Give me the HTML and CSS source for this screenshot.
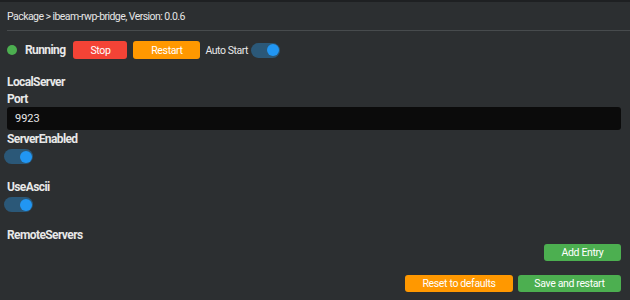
FILE: index.html
```html
<!DOCTYPE html>
<html lang="en">
<head>
  <meta charset="UTF-8">
  <title>Package ibeam-rwp-bridge</title>
  <link rel="stylesheet" href="styles.css">
</head>
<body>
  <div class="panel">
    <!-- Header -->
    <div class="crumb">Package &gt; ibeam-rwp-bridge, Version: 0.0.6</div>

    <!-- Status row -->
    <div class="status-row">
      <span class="dot"></span>
      <span class="state">Running</span>
      <button class="btn red stop">Stop</button>
      <button class="btn orange restart">Restart</button>
      <span class="auto-label">Auto Start</span>
      <span class="toggle"><span class="knob"></span></span>
    </div>

    <!-- Settings -->
    <div class="settings">
      <div class="group-title">LocalServer</div>
      <div class="field-label">Port</div>
      <div class="input">9923</div>
      <div class="field-label">ServerEnabled</div>
      <span class="toggle field-toggle"><span class="knob"></span></span>
      <div class="field-label spaced">UseAscii</div>
      <span class="toggle field-toggle"><span class="knob"></span></span>
      <div class="group-title remote">RemoteServers</div>
      <div class="entry-row">
        <button class="btn green add">Add Entry</button>
      </div>
    </div>

    <!-- Footer -->
    <div class="footer">
      <button class="btn orange reset">Reset to defaults</button>
      <button class="btn green save">Save and restart</button>
    </div>
  </div>
</body>
</html>
```

FILE: styles.css
```css
* {
  margin: 0;
  padding: 0;
  box-sizing: border-box;
}
html, body {
  width: 100%;
  height: 100%;
  background: #2c2f31;
  font-family: 'Roboto', 'Liberation Sans', sans-serif;
  color: #e8e8e8;
  overflow: hidden;
}
.panel {
  border-top: 2px solid #1e2022;
  padding-left: 7px;
}
/* Header */
.crumb {
  font-size: 10.5px;
  letter-spacing: -0.55px;
  height: 29px;
  line-height: 30px;
  color: #e6e6e6;
  border-bottom: 1px solid #474b4d;
}
/* Status */
.status-row {
  display: flex;
  align-items: center;
  height: 37px;
  padding-top: 1px;
}
.dot {
  width: 10px;
  height: 10px;
  border-radius: 50%;
  background: #4caf50;
}
.state {
  font-weight: bold;
  font-size: 12px;
  letter-spacing: -0.6px;
  margin-left: 8px;
  margin-right: 8px;
}
.btn {
  display: flex;
  align-items: center;
  justify-content: center;
  border: none;
  border-radius: 3px;
  font-family: inherit;
  font-size: 10.5px;
  letter-spacing: -0.35px;
  color: #fff;
  height: 18px;
  cursor: pointer;
}
.btn.red { background: #f44336; }
.btn.orange { background: #ff9800; }
.btn.green { background: #4caf50; }
.stop { width: 54px; }
.restart { width: 67px; margin-left: 6px; }
.auto-label {
  font-size: 10.5px;
  letter-spacing: -0.45px;
  margin-left: 5px;
  margin-right: 3px;
}
/* Toggle */
.toggle {
  display: flex;
  align-items: center;
  justify-content: flex-end;
  width: 29px;
  height: 15px;
  border-radius: 8px;
  background: #2b5878;
  padding-right: 1px;
}
.knob {
  width: 12px;
  height: 12px;
  border-radius: 50%;
  background: #2196f3;
}
/* Settings */
.settings {
  padding-top: 1px;
  padding-right: 9px;
}
.group-title {
  font-weight: bold;
  font-size: 12px;
  letter-spacing: -0.6px;
  line-height: 18px;
  padding-top: 4px;
}
.field-label {
  font-weight: bold;
  font-size: 12px;
  letter-spacing: -0.6px;
  line-height: 16px;
}
.spaced {
  padding-top: 15px;
}
.remote {
  padding-top: 14px;
}
.input {
  background: #0b0b0b;
  border-radius: 3px;
  height: 23px;
  line-height: 23px;
  font-size: 11px;
  padding-left: 8px;
  margin-bottom: 1px;
}
.field-toggle {
  margin-left: -3px;
  margin-top: 2px;
}
.entry-row {
  display: flex;
  justify-content: flex-end;
}
.add { width: 77px; height: 17px; }
/* Footer */
.footer {
  display: flex;
  justify-content: flex-end;
  gap: 5px;
  padding-right: 9px;
  margin-top: 14px;
}
.reset { width: 108px; height: 17px; }
.save { width: 103px; height: 17px; }
```
